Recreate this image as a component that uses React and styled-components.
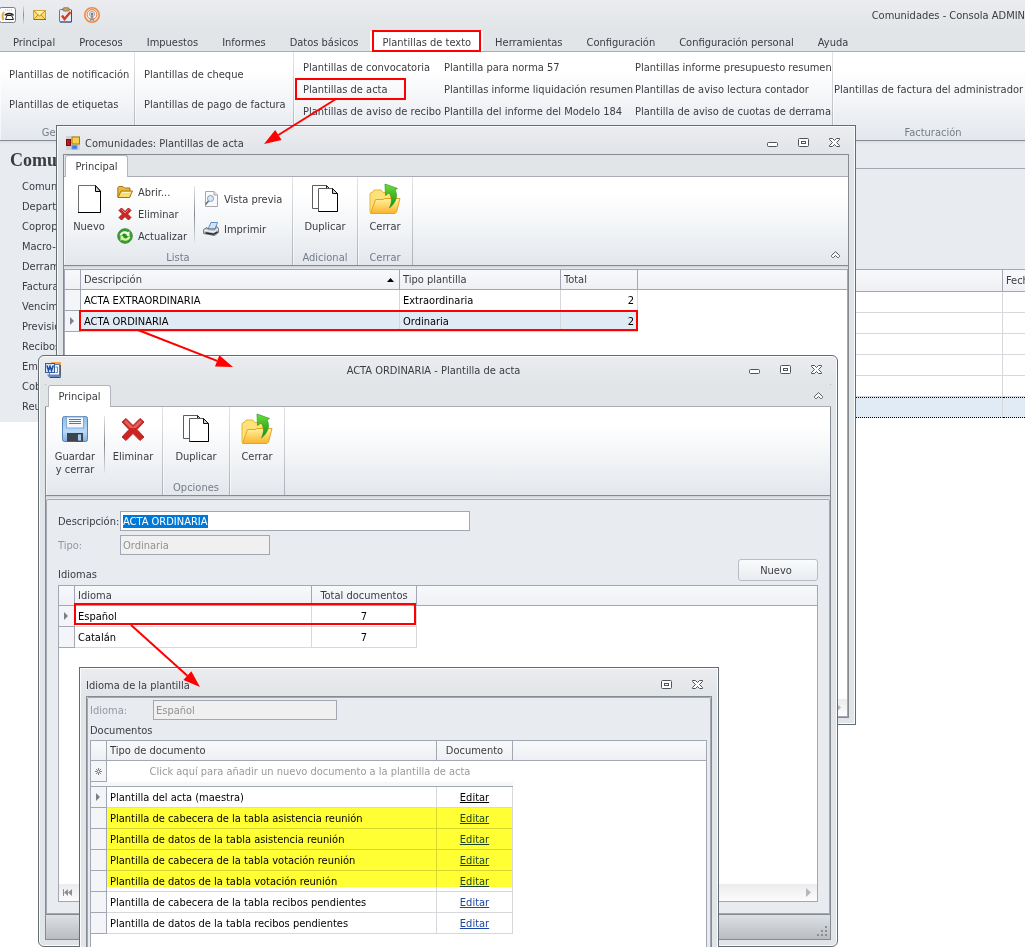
import React, { useEffect, useRef } from 'react';
import styled, { createGlobalStyle, css } from 'styled-components';

const FONT = '"DejaVu Sans Condensed", "DejaVu Sans", sans-serif';
const LINE = '#a2a7b3';
const CELL_LINE = '#d6d8dc';
const FRAME = '#e1e5e8';
const PANEL = '#e8ebf0';

const GlobalStyle = createGlobalStyle`
    *, *::before, *::after {
        box-sizing: border-box;
    }
    body {
        margin: 0;
        font-family: ${FONT};
        font-size: 11px;
        line-height: 13px;
        color: #3b3b42;
        background: #fff;
    }
    button, input {
        font: inherit;
        color: inherit;
        letter-spacing: inherit;
    }
    svg {
        display: block;
        flex: none;
    }
`;

const Desktop = styled.div`
    position: relative;
    height: 100vh;
    overflow: hidden;
    white-space: nowrap;
    cursor: default;
`;

const plainButton = css`
    border: 0;
    padding: 0;
    background: none;
`;

/* ---------- ribbon ---------- */

const Ribbon = styled.div`
    display: flex;
    height: 89px;
    border-bottom: 1px solid #868a92;
    background: linear-gradient(#fff 20%, #f3f5f7 55%, #e3e7ec);
    overflow: hidden;
`;
const RibbonShadow = styled.div`
    height: 3px;
    background: linear-gradient(#cdd0d5, ${PANEL});
`;
const Group = styled.section`
    display: flex;
    flex-direction: column;
    flex: none;
    width: ${(props) => props.$width}px;
    border-right: 1px solid;
    border-image: linear-gradient(#e3e5e8, #abafb8) 1;
    box-shadow: inset 1px 0 0 rgba(255, 255, 255, 0.6);
`;
const GroupBody = styled.div`
    display: flex;
    height: 72px;
`;
const GroupLabel = styled.div`
    height: 16px;
    line-height: 18px;
    text-align: center;
    color: #767b8a;
`;
const ItemColumn = styled.div`
    display: flex;
    flex-direction: column;
    justify-content: center;
    align-items: flex-start;
    flex: none;
    width: ${(props) => (props.$width ? `${props.$width}px` : 'auto')};
    padding-top: 2px;
    padding-left: ${(props) => props.$indent || 0}px;
`;
const Item = styled.button`
    ${plainButton};
    display: flex;
    align-items: center;
    gap: 5px;
    height: ${(props) => (props.$loose ? 30 : 22)}px;
`;
const BigButton = styled.button`
    ${plainButton};
    display: flex;
    flex-direction: column;
    align-items: center;
    gap: 5px;
    width: ${(props) => (props.$width ? `${props.$width}px` : '100%')};
    padding-top: 6px;
`;
const Divider = styled.div`
    width: 1px;
    margin: 9px 0 6px;
    background: linear-gradient(#e3e5e8, #85898f 50%, #e3e5e8);
`;
const TabStrip = styled.div`
    display: flex;
    align-items: flex-end;
    height: 22px;
    border-bottom: 1px solid #a9acb5;
    background: ${FRAME};
    ${(props) => props.$flush && 'margin: 0 -1px; padding-left: 2px;'}
`;
const Tab = styled.button`
    ${plainButton};
    width: 63px;
    height: 22px;
    margin: 0 auto -1px 1px;
    border: 1px solid #b3b6be;
    border-bottom: 0;
    border-radius: 3px 3px 0 0;
    background: #fff;
`;

/* ---------- main window ---------- */

const MainTitle = styled.header`
    display: flex;
    align-items: center;
    height: 31px;
    padding-bottom: 1px;
    background: linear-gradient(#ebecef, ${FRAME});
`;
const QuickButton = styled.button`
    ${plainButton};
    margin-right: 10px;
`;
const QuickSeparator = styled.span`
    width: 1px;
    height: 18px;
    margin: 0 8px 0 -3px;
    background: linear-gradient(#d8dbdf, #8b8f96, #d8dbdf);
`;
const MainCaption = styled.h2`
    margin: 0 0 0 auto;
    font: inherit;
`;
const MainTabs = styled.nav`
    display: flex;
    height: 21px;
    padding-left: 1px;
    border-bottom: 1px solid #a9abb5;
    background: ${FRAME};
`;
const MainTab = styled.button`
    ${plainButton};
    height: 20px;
    padding: 2px 12px 0;
    flex: none;
    ${(props) => props.$active && 'background: #fff;'}
`;
const MainBody = styled.main`
    display: flex;
    align-items: flex-start;
`;
const Sidebar = styled.nav`
    width: 256px;
    padding: 8px 0 6px 10px;
    background: linear-gradient(#d9dce1, ${PANEL} 3px);
`;
const SidebarTitle = styled.h1`
    margin: 0 0 5px;
    font: bold 18px/22px 'Liberation Serif', serif;
`;
const SidebarLink = styled.a`
    display: block;
    height: 20px;
    padding-left: 12px;
    line-height: 21px;
    color: inherit;
    text-decoration: none;
`;
const Content = styled.div`
    flex: 1;
    background: linear-gradient(#d9dce1, ${PANEL} 3px);
`;
const FilterBar = styled.div`
    height: 28px;
    border-bottom: 1px solid ${LINE};
`;
const FilterArea = styled.div`
    height: 100px;
`;

/* ---------- tables ---------- */

const Table = styled.table`
    width: 100%;
    table-layout: fixed;
    border-collapse: separate;
    border-spacing: 0;
`;
const Col = styled.col`
    width: ${(props) => props.$width}px;
`;
const Th = styled.th`
    height: 20px;
    padding: 0 3px;
    border-right: 1px solid ${LINE};
    border-bottom: 1px solid ${LINE};
    background: linear-gradient(#f8f9fb, #eef0f4);
    font-weight: normal;
    text-align: ${(props) => props.$align || 'left'};
    overflow: hidden;
    &:last-child {
        border-right: 0;
    }
`;
const Td = styled.td`
    height: 21px;
    padding: 0 3px;
    border-right: 1px solid ${CELL_LINE};
    border-bottom: 1px solid ${CELL_LINE};
    color: #000;
    text-align: ${(props) => props.$align || 'left'};
    ${(props) => props.$selected && 'background: #e1ebf6;'}
`;
const Handle = styled.td`
    height: 21px;
    padding: 0;
    border-right: 1px solid ${LINE};
    border-bottom: 1px solid ${LINE};
    background: #f4f5f8;
    svg {
        margin: auto;
    }
`;
const Sorted = styled.span`
    display: flex;
    align-items: center;
    justify-content: space-between;
    padding-right: 2px;
`;
const BackTable = styled(Table)`
    border-top: 1px solid ${LINE};
    background: #fff;
    ${Th} {
        height: 22px;
    }
    ${Td}:last-child {
        border-right: 0;
    }
    tr:last-child ${Td} {
        border-top: 1px dotted #000;
        border-bottom: 1px dotted #000;
        background: #e1ebf6;
    }
`;
const NewRowHint = styled(Td)`
    border: 0;
    color: #9a9a9e;
`;
const NewRowGap = styled.td`
    height: 5px;
    padding: 0;
    border-bottom: 1px solid ${LINE};
    background: #f6f7f9;
`;
const EditLink = styled.a`
    color: ${(props) => (props.$current ? '#000' : '#1c46a4')};
    text-decoration: underline;
    text-underline-offset: 1px;
`;
const GridPane = styled.div`
    display: flex;
    flex-direction: column;
    flex: 1;
    border: 1px solid ${LINE};
    background: #fff;
`;
const ScrollStrip = styled.div`
    display: flex;
    align-items: center;
    justify-content: space-between;
    height: 17px;
    margin-top: auto;
    padding: 0 6px 0 4px;
    background: linear-gradient(#ececee, #fcfcfc);
`;

/* ---------- floating windows ---------- */

const Window = styled.section`
    position: absolute;
    left: ${(props) => props.$x}px;
    top: ${(props) => props.$y}px;
    width: ${(props) => props.$w}px;
    height: ${(props) => props.$h}px;
    display: flex;
    flex-direction: column;
    padding: 0 6px 6px;
    border: 1px solid #636b73;
    border-radius: ${(props) => (props.$round ? '6px' : 0)};
    background: linear-gradient(#ebecef, ${FRAME} 30px);
    box-shadow: inset 0 0 0 1px #fafbfc;
`;
const TitleBar = styled.header`
    display: flex;
    align-items: center;
    flex: none;
    height: 28px;
    padding: ${(props) => (props.$flush ? 0 : 6)}px 9px 0 ${(props) => (props.$plain ? 0 : 3)}px;
`;
const WindowTitle = styled.h2`
    flex: 1;
    margin: 0;
    padding-left: ${(props) => props.$pad || 0}px;
    font: inherit;
    text-align: ${(props) => (props.$center ? 'center' : 'left')};
`;
const Controls = styled.div`
    display: flex;
    gap: 20px;
    padding-bottom: 1px;
`;
const ControlButton = styled.button`
    ${plainButton};
`;
const Client = styled.div`
    display: flex;
    flex-direction: column;
    flex: 1;
    border: 1px solid #868a92;
    ${(props) => props.$flush && `border-top-color: ${FRAME};`}
`;
const Collapse = styled.button`
    ${plainButton};
    align-self: flex-end;
    margin: 0 8px 7px auto;
`;
const Panel = styled.div`
    display: flex;
    flex-direction: column;
    flex: 1;
    padding: ${(props) => (props.$tight ? '2px 3px 3px 2px' : '11px 11px 11px 11px')};
    border: 1px solid ${LINE};
    border-radius: 2px 2px 0 0;
    background: ${PANEL};
`;
const Field = styled.div`
    display: flex;
    align-items: center;
    margin-bottom: 4px;
    color: ${(props) => (props.$off ? '#9698a0' : 'inherit')};
`;
const FieldLabel = styled.label`
    width: ${(props) => props.$width}px;
`;
const TextBox = styled.input`
    width: ${(props) => props.$width}px;
    height: 20px;
    padding: 0 2px;
    border: 1px solid ${LINE};
    border-radius: 0;
    background: #fff;
    outline: 0;
    &:disabled {
        background: #f0f0f0;
        color: #929292;
    }
    &::selection {
        background: #0078d7;
        color: #fff;
    }
`;
const ListHeader = styled.div`
    display: flex;
    align-items: flex-end;
    justify-content: space-between;
    margin-bottom: ${(props) => (props.$tight ? 3 : 4)}px;
`;
const PushButton = styled.button`
    width: 80px;
    height: 22px;
    padding: 0 4px 0 0;
    border: 1px solid #b9bdc4;
    border-radius: 3px;
    background: linear-gradient(#f9fbfc, #e9ecf0);
`;
const StatusBar = styled.footer`
    display: flex;
    align-items: flex-end;
    justify-content: flex-end;
    height: 25px;
    padding: 2px;
    border-top: 1px solid #868a92;
    background: linear-gradient(#dde0e3, #b9bdc2);
`;

/* ---------- annotations ---------- */

const Mark = styled.div`
    position: absolute;
    left: ${(props) => props.$x}px;
    top: ${(props) => props.$y}px;
    width: ${(props) => props.$w}px;
    height: ${(props) => props.$h}px;
    border: 2px solid #f00;
    pointer-events: none;
`;
const Highlight = styled(Mark)`
    border: 0;
    background: #ff3;
    mix-blend-mode: multiply;
`;
const Arrows = styled.svg`
    position: absolute;
    left: 0;
    top: 0;
    pointer-events: none;
`;

/* ---------- icons ---------- */

const PageIcon = () => (
    <svg width="32" height="32" viewBox="0 0 32 32">
        <path d="M5.500 2.500H22.500L27.500 7.500V29.500H5.500Z" fill="#fff" stroke="#6d6d6d" />
        <path d="M5 29.500H27.500V8" fill="none" stroke="#000" />
        <path d="M22.500 2.500V8.500H27.500Z" fill="#d5d5d5" stroke="#000" />
    </svg>
);
const CopyIcon = () => (
    <svg width="32" height="32" viewBox="0 0 32 32">
        <path d="M3.500 2.500H17.500L21.500 6.500V25.500H3.500Z" fill="#fff" stroke="#5c5c5c" />
        <path d="M17.500 2.500V6H21Z" fill="#ccc" stroke="#222" />
        <path d="M9.500 5.500H23.500L28.500 10.500V28.500H9.500Z" fill="#fff" stroke="#5c5c5c" />
        <path d="M9.500 28.500H28.500V10.500" fill="none" stroke="#000" />
        <path d="M23.500 5.500V10.500H28.500Z" fill="#d0d0d0" stroke="#111" />
    </svg>
);
const CloseFolderIcon = () => (
    <svg width="32" height="32" viewBox="0 0 32 32">
        <defs>
            <linearGradient id="fold" x1="0" y1="0" x2="0" y2="1">
                <stop offset="0" stopColor="#fff2a0" />
                <stop offset="1" stopColor="#fbb42a" />
            </linearGradient>
            <linearGradient id="leaf" x1="0" y1="0" x2="0" y2="1">
                <stop offset="0" stopColor="#6be03a" />
                <stop offset="1" stopColor="#138a10" />
            </linearGradient>
        </defs>
        <path d="M1 29V10.500L4 8.500L5 7H12L14 9.500H22V29Z" fill="#fde27a" stroke="#e8b535" />
        <path d="M1.500 30.500L6.500 16.500H14L16 15.500H31L27.500 29L26 30.500Z" fill="url(#fold)" stroke="#e9a41c" />
        <path d="M16 1L28.500 5.500L26 7C29.500 13 26.500 20 20.500 25C23 19 23.500 14 20 10L16.500 12.500Z" fill="url(#leaf)" stroke="#2f9a22" strokeWidth=".7" />
    </svg>
);
const CrossIcon = ({ size }) => (
    <svg width={size} height={size} viewBox="0 0 32 32">
        <path
            d="M9 5.500L16 12.500L23 5.500L27 9L20 16.500L27 24L23 27.500L16 20.500L9 27.500L5 24L12 16.500L5 9Z"
            fill="#cb2422"
            stroke="#b52b2b"
            strokeLinejoin="round"
        />
        <path d="M9 7L16 14L23 7L25 9L19 15H13L7 9Z" fill="#e8716c" opacity=".8" />
    </svg>
);
const SmallCrossIcon = () => (
    <svg width="16" height="16" viewBox="0 0 16 16">
        <path
            d="M4.500 2L8 5.500L11.500 2L14 4.500L10.500 8L14 11.500L11.500 14L8 10.500L4.500 14L2 11.500L5.500 8L2 4.500Z"
            fill="#d02623"
            stroke="#a51b1c"
            strokeLinejoin="round"
        />
        <path d="M4.500 3.500L8 7L11.500 3.500" fill="none" stroke="#ee8580" />
    </svg>
);
const SaveIcon = () => (
    <svg width="32" height="32" viewBox="0 0 32 32">
        <defs>
            <linearGradient id="disk" x1="0" y1="0" x2="0" y2="1">
                <stop offset="0" stopColor="#8fbbe8" />
                <stop offset=".6" stopColor="#b9dbf7" />
                <stop offset="1" stopColor="#7fb0e4" />
            </linearGradient>
        </defs>
        <rect x="3.500" y="3.500" width="25" height="25" rx="2" fill="url(#disk)" stroke="#5684b9" />
        <rect x="7.500" y="4" width="17" height="11" fill="#f4f8fc" stroke="#86a9cf" />
        <path d="M10 6.500H22M10 8.500H22M10 10.500H22" stroke="#6c7680" />
        <rect x="8" y="20" width="16" height="8.500" fill="#3d444c" />
        <rect x="18.500" y="21" width="4" height="7" fill="#a9c8ea" stroke="#222" strokeWidth=".6" />
    </svg>
);
const OpenIcon = () => (
    <svg width="16" height="16" viewBox="0 0 16 16">
        <path d="M.8 13V3.500L2 2.500H6L7.500 4H13V13Z" fill="#e8b93a" stroke="#a87716" />
        <path d="M1 13.500L4 7H15.500L12.500 13.500Z" fill="#fcdc6a" stroke="#a8740f" />
        <path d="M5 8.500H13.500" stroke="#fff6c8" />
    </svg>
);
const RefreshIcon = () => (
    <svg width="16" height="16" viewBox="0 0 16 16">
        <circle cx="8" cy="8" r="7.300" fill="#2f9f2b" stroke="#4a8a4c" />
        <path d="M2.500 7.500C3 3.500 8 2 11 4.200L12.500 3V8H8L9.300 6.200C7.500 5 5.500 5.500 5 7.500Z" fill="#f4fbe9" />
        <path d="M13.500 8.500C13 12.500 8 14 5 11.800L3.500 13V8H8L6.700 9.800C8.500 11 10.500 10.500 11 8.500Z" fill="#d9f2a0" />
        <path d="M6 6.500H10V9.500H6Z" fill="#1c8a20" opacity=".8" />
    </svg>
);
const PreviewIcon = () => (
    <svg width="16" height="16" viewBox="0 0 16 16">
        <path d="M2.500 .5H11L14.500 4V15.500H2.500Z" fill="#fafafa" stroke="#a5a8ad" />
        <path d="M11 .5V4H14.500" fill="#ddd" stroke="#a5a8ad" />
        <circle cx="7.500" cy="7.500" r="3" fill="#d7e9f8" stroke="#7c9cbc" />
        <path d="M5.500 10L2.500 13.500" stroke="#6d7278" strokeWidth="1.600" />
    </svg>
);
const PrintIcon = () => (
    <svg width="16" height="16" viewBox="0 0 16 16">
        <path d="M5 8L8 1.500H14.500L12 8Z" fill="#cfe3fa" stroke="#5f8fc4" />
        <path d="M.6 8.500L4 6.500L5 8H12L13.500 5.500L15.500 7V11.500L11.500 14.500L.6 12.500Z" fill="#c3c8cf" stroke="#6f757d" />
        <path d="M1 9.200L11 11L15.300 8" fill="none" stroke="#f7f8f9" />
        <path d="M2.500 11.800L10.500 13.300L14.500 10.800" fill="none" stroke="#22262b" strokeWidth="1.400" />
    </svg>
);
const FormIcon = () => (
    <svg width="14" height="14" viewBox="0 0 14 14">
        <rect width="14" height="14" fill="#cfd2d6" />
        <rect x=".5" y="3.500" width="4" height="6" fill="#c01818" stroke="#7d0d0d" />
        <rect x="6" y="1" width="7.500" height="7" fill="#f8cf4b" stroke="#a87b14" />
        <rect x="6" y="9.500" width="5" height="3.500" fill="#3f78e0" stroke="#6f9cf0" />
    </svg>
);
const WordIcon = () => (
    <svg width="16" height="16" viewBox="0 0 16 16">
        <rect x="6" y="0" width="10" height="13" fill="#f1a545" />
        <rect x="4.500" y="2.500" width="10" height="11" fill="#f5f8fc" stroke="#5f83b8" />
        <path d="M2 12.500H14.500V15.500H4Z" fill="#6687b5" />
        <path d="M15.300 3V15.500H5" stroke="#2f4f80" fill="none" />
        <rect x=".5" y="1.500" width="9" height="9" fill="#d5e4f8" stroke="#2f5ca6" />
        <path d="M2 3.500L3.500 8.500L5 4.500L6.500 8.500L8.300 3.500" fill="none" stroke="#1d4a9c" strokeWidth="1.500" />
        <path d="M10.500 5H12.500V10.500H10.500" stroke="#5d86c4" fill="none" />
    </svg>
);
const PhoneIcon = () => (
    <svg width="16" height="16" viewBox="0 0 16 16">
        <rect x="-.5" y=".5" width="16" height="15" rx="2" fill="#fdfdfd" stroke="#7c7f84" />
        <path d="M5 3H12" stroke="#b0b3b8" strokeDasharray="1 1" />
        <path d="M4 5C2 7.500 2 10 3.500 13" fill="none" stroke="#e9a62d" strokeWidth="2" />
        <path d="M4.500 8.500C4.500 4.800 14 4.800 14 8.500H11.500L11 7.500H7.500L7 8.500Z" fill="#222" />
        <path d="M5.500 12.500L7 8.500H11.500L13.500 12.500Z" fill="#fff" stroke="#222" />
    </svg>
);
const MailIcon = () => (
    <svg width="16" height="16" viewBox="0 0 16 16">
        <rect x="1.500" y="3.500" width="12" height="9" fill="#fbdc72" stroke="#d0a33c" />
        <path d="M2 12.500H14" stroke="#9c6d12" />
        <path d="M2 4L7.500 9L13 4M2 12L6 8M13 12L9 8" fill="none" stroke="#c08f24" />
        <path d="M3 4H12L7.500 8Z" fill="#fff0b5" />
    </svg>
);
const TaskIcon = () => (
    <svg width="16" height="16" viewBox="0 0 16 16">
        <rect x="1.500" y="2.500" width="12" height="12.500" rx="1" fill="#e3ecf8" stroke="#5b78a8" />
        <path d="M13.500 3V15H2" fill="none" stroke="#34507e" />
        <rect x="5" y=".8" width="6" height="3.200" rx="1" fill="#c9a96a" stroke="#7f6530" strokeWidth=".8" />
        <path d="M4 8.500L6.500 12L12.500 5" fill="none" stroke="#df3b1d" strokeWidth="2.400" />
    </svg>
);
const BroadcastIcon = () => (
    <svg width="16" height="16" viewBox="0 0 16 16">
        <circle cx="8" cy="8" r="7.200" fill="#f3ece8" stroke="#f08b3e" strokeWidth="1.600" />
        <circle cx="8" cy="7.500" r="4.900" fill="none" stroke="#e77a4c" />
        <circle cx="8" cy="7" r="2.600" fill="none" stroke="#a9acb3" />
        <circle cx="8" cy="7" r="1.300" fill="#7a7e86" />
        <path d="M8 8L6 14.500M8 8L10 14.500M7 11H9M6.500 13H9.500" stroke="#85898f" strokeWidth=".9" />
    </svg>
);
const MinimizeIcon = () => (
    <svg width="11" height="9" viewBox="0 0 11 9">
        <rect x=".5" y="4.500" width="10" height="4" rx="1" fill="#fff" stroke="#4f5459" />
    </svg>
);
const MaximizeIcon = () => (
    <svg width="11" height="9" viewBox="0 0 11 9">
        <rect x=".5" y=".5" width="10" height="8" rx="1" fill="#fff" stroke="#4f5459" />
        <rect x="3.500" y="3.500" width="4" height="2" fill="#fff" stroke="#4f5459" />
    </svg>
);
const CloseIcon = () => (
    <svg width="11" height="9" viewBox="0 0 11 9">
        <path
            d="M.5 .5H3.500L5.500 2.500L7.500 .5H10.500V1.500L7.500 4.500L10.500 7.500V8.500H7.500L5.500 6.500L3.500 8.500H.5V7.500L3.500 4.500L.5 1.500Z"
            fill="#fff"
            stroke="#4f5459"
        />
    </svg>
);
const ChevronIcon = () => (
    <svg width="9" height="7" viewBox="0 0 9 7">
        <path d="M.5 4.500L4.500 .7L8.500 4.500V5.500L7.500 6.500H6.500L4.500 4.500L2.500 6.500H1.500L.5 5.500Z" fill="#fff" stroke="#4f5459" />
    </svg>
);
const RowMarker = () => (
    <svg width="5" height="8" viewBox="0 0 5 8">
        <path d="M0 0L4 4L0 8Z" fill="#7b8088" />
    </svg>
);
const NewMarker = () => (
    <svg width="7" height="7" viewBox="0 0 7 7">
        <path d="M3.500 0V7M0 3.500H7M1 1L6 6M6 1L1 6" stroke="#7b8088" />
        <circle cx="3.500" cy="3.500" r="1" fill="#fff" />
    </svg>
);
const SortArrow = () => (
    <svg width="7" height="4" viewBox="0 0 7 4">
        <path d="M0 4L3.500 0L7 4Z" fill="#000" />
    </svg>
);
const FirstIcon = () => (
    <svg width="9" height="7" viewBox="0 0 9 7">
        <path d="M.5 0V7" stroke="#8d9197" />
        <path d="M1 3.500L5 0V7ZM5 3.500L9 0V7Z" fill="#8d9197" />
    </svg>
);
const NextIcon = () => (
    <svg width="5" height="9" viewBox="0 0 5 9">
        <path d="M0 0L5 4.500L0 9Z" fill="#b5b7bb" />
    </svg>
);
const GripIcon = () => (
    <svg width="11" height="11" viewBox="0 0 11 11" fill="#8b8f95">
        <path d="M8 0h2v2h-2zM4 4h2v2h-2zM8 4h2v2h-2zM0 8h2v2h-2zM4 8h2v2h-2zM8 8h2v2h-2z" />
    </svg>
);

/* ---------- data ---------- */

const mainTabs = [
    'Principal',
    'Procesos',
    'Impuestos',
    'Informes',
    'Datos básicos',
    'Plantillas de texto',
    'Herramientas',
    'Configuración',
    'Configuración personal',
    'Ayuda',
];

const sections = [
    'Comunidades',
    'Departamentos',
    'Copropietarios',
    'Macro-comunidades',
    'Derramas',
    'Facturas',
    'Vencimientos',
    'Previsiones',
    'Recibos',
    'Emisiones',
    'Cobros',
    'Reuniones',
];

const mainGroups = [
    {
        label: 'Generales',
        width: 135,
        columns: [{ indent: 9, items: ['Plantillas de notificación', 'Plantillas de etiquetas'] }],
    },
    {
        label: '',
        width: 159,
        columns: [{ indent: 9, items: ['Plantillas de cheque', 'Plantillas de pago de factura'] }],
    },
    {
        label: '',
        width: 539,
        columns: [
            {
                width: 150,
                indent: 9,
                items: ['Plantillas de convocatoria', 'Plantillas de acta', 'Plantillas de aviso de recibo'],
            },
            {
                width: 191,
                indent: 0,
                items: [
                    'Plantilla para norma 57',
                    'Plantillas informe liquidación resumen',
                    'Plantilla del informe del Modelo 184',
                ],
            },
            {
                indent: 0,
                items: [
                    'Plantillas informe presupuesto resumen',
                    'Plantillas de aviso lectura contador',
                    'Plantilla de aviso de cuotas de derrama',
                ],
            },
        ],
    },
    {
        label: 'Facturación',
        width: 201,
        columns: [{ indent: 1, items: ['Plantillas de factura del administrador'] }],
    },
];

const templates = [
    { name: 'ACTA EXTRAORDINARIA', type: 'Extraordinaria', total: 2 },
    { name: 'ACTA ORDINARIA', type: 'Ordinaria', total: 2, selected: true },
];

const languages = [
    { name: 'Español', total: 7, selected: true },
    { name: 'Catalán', total: 7 },
];

const documents = [
    'Plantilla del acta (maestra)',
    'Plantilla de cabecera de la tabla asistencia reunión',
    'Plantilla de datos de la tabla asistencia reunión',
    'Plantilla de cabecera de la tabla votación reunión',
    'Plantilla de datos de la tabla votación reunión',
    'Plantilla de cabecera de la tabla recibos pendientes',
    'Plantilla de datos de la tabla recibos pendientes',
];

const arrows = [
    { from: [336, 99], to: [264, 144] },
    { from: [138, 330], to: [233, 367] },
    { from: [131, 625], to: [200, 687] },
];

/* ---------- components ---------- */

function MainWindow() {
    return (
        <>
            <MainTitle>
                <QuickButton aria-label="Consola">
                    <PhoneIcon />
                </QuickButton>
                <QuickSeparator />
                <QuickButton aria-label="Correo">
                    <MailIcon />
                </QuickButton>
                <QuickButton aria-label="Tareas">
                    <TaskIcon />
                </QuickButton>
                <QuickButton aria-label="Difusión">
                    <BroadcastIcon />
                </QuickButton>
                <MainCaption>Comunidades - Consola ADMIN</MainCaption>
            </MainTitle>
            <MainTabs>
                {mainTabs.map((tab) => (
                    <MainTab key={tab} $active={tab === 'Plantillas de texto'}>
                        {tab}
                    </MainTab>
                ))}
            </MainTabs>
            <Ribbon>
                {mainGroups.map((group) => (
                    <Group key={group.width} $width={group.width}>
                        <GroupBody>
                            {group.columns.map((col) => (
                                <ItemColumn key={col.items[0]} $width={col.width} $indent={col.indent}>
                                    {col.items.map((item) => (
                                        <Item key={item} $loose={col.items.length === 2}>
                                            {item}
                                        </Item>
                                    ))}
                                </ItemColumn>
                            ))}
                        </GroupBody>
                        <GroupLabel>{group.label}</GroupLabel>
                    </Group>
                ))}
            </Ribbon>
            <MainBody>
                <Sidebar>
                    <SidebarTitle>Comunidades</SidebarTitle>
                    {sections.map((section) => (
                        <SidebarLink key={section} href="#">
                            {section}
                        </SidebarLink>
                    ))}
                </Sidebar>
                <Content>
                    <FilterBar />
                    <FilterArea />
                    <BackTable>
                        <colgroup>
                            <col />
                            <Col $width={22} />
                        </colgroup>
                        <thead>
                            <tr>
                                <Th />
                                <Th>Fecha</Th>
                            </tr>
                        </thead>
                        <tbody>
                            {[1, 2, 3, 4, 5, 6].map((row) => (
                                <tr key={row}>
                                    <Td />
                                    <Td />
                                </tr>
                            ))}
                        </tbody>
                    </BackTable>
                </Content>
            </MainBody>
        </>
    );
}

function WindowControls({ minimize }) {
    return (
        <Controls>
            {minimize && (
                <ControlButton aria-label="Minimizar">
                    <MinimizeIcon />
                </ControlButton>
            )}
            <ControlButton aria-label="Maximizar">
                <MaximizeIcon />
            </ControlButton>
            <ControlButton aria-label="Cerrar ventana">
                <CloseIcon />
            </ControlButton>
        </Controls>
    );
}

function TemplatesWindow() {
    return (
        <Window $x={56} $y={125} $w={800} $h={600}>
            <TitleBar>
                <FormIcon />
                <WindowTitle $pad={5}>Comunidades: Plantillas de acta</WindowTitle>
                <WindowControls minimize />
            </TitleBar>
            <Client>
                <TabStrip>
                    <Tab>Principal</Tab>
                </TabStrip>
                <Ribbon>
                    <Group $width={229}>
                        <GroupBody>
                            <BigButton $width={50}>
                                <PageIcon />
                                Nuevo
                            </BigButton>
                            <ItemColumn $width={80} $indent={3}>
                                <Item>
                                    <OpenIcon />
                                    Abrir...
                                </Item>
                                <Item>
                                    <SmallCrossIcon />
                                    Eliminar
                                </Item>
                                <Item>
                                    <RefreshIcon />
                                    Actualizar
                                </Item>
                            </ItemColumn>
                            <Divider />
                            <ItemColumn $indent={8}>
                                <Item $loose>
                                    <PreviewIcon />
                                    Vista previa
                                </Item>
                                <Item $loose>
                                    <PrintIcon />
                                    Imprimir
                                </Item>
                            </ItemColumn>
                        </GroupBody>
                        <GroupLabel>Lista</GroupLabel>
                    </Group>
                    <Group $width={65}>
                        <GroupBody>
                            <BigButton>
                                <CopyIcon />
                                Duplicar
                            </BigButton>
                        </GroupBody>
                        <GroupLabel>Adicional</GroupLabel>
                    </Group>
                    <Group $width={55}>
                        <GroupBody>
                            <BigButton>
                                <CloseFolderIcon />
                                Cerrar
                            </BigButton>
                        </GroupBody>
                        <GroupLabel>Cerrar</GroupLabel>
                    </Group>
                    <Collapse aria-label="Contraer">
                        <ChevronIcon />
                    </Collapse>
                </Ribbon>
                <RibbonShadow />
                <GridPane>
                    <Table>
                        <colgroup>
                            <Col $width={16} />
                            <Col $width={319} />
                            <Col $width={161} />
                            <Col $width={77} />
                            <col />
                        </colgroup>
                        <thead>
                            <tr>
                                <Th />
                                <Th>
                                    <Sorted>
                                        Descripción
                                        <SortArrow />
                                    </Sorted>
                                </Th>
                                <Th>Tipo plantilla</Th>
                                <Th>Total</Th>
                                <Th />
                            </tr>
                        </thead>
                        <tbody>
                            {templates.map((row) => (
                                <tr key={row.name}>
                                    <Handle>{row.selected && <RowMarker />}</Handle>
                                    <Td $selected={row.selected}>{row.name}</Td>
                                    <Td $selected={row.selected}>{row.type}</Td>
                                    <Td $selected={row.selected} $align="right">
                                        {row.total}
                                    </Td>
                                </tr>
                            ))}
                        </tbody>
                    </Table>
                    <ScrollStrip>
                        <span />
                        <NextIcon />
                    </ScrollStrip>
                </GridPane>
            </Client>
        </Window>
    );
}

function TemplateWindow() {
    const description = useRef(null);

    useEffect(() => {
        description.current.focus({ preventScroll: true });
        description.current.select();
    }, []);

    return (
        <Window $x={38} $y={355} $w={800} $h={592} $round>
            <TitleBar $flush $plain>
                <WordIcon />
                <WindowTitle $center $pad={57}>
                    ACTA ORDINARIA - Plantilla de acta
                </WindowTitle>
                <WindowControls minimize />
            </TitleBar>
            <Client $flush>
                <TabStrip $flush>
                    <Tab>Principal</Tab>
                    <Collapse aria-label="Contraer">
                        <ChevronIcon />
                    </Collapse>
                </TabStrip>
                <Ribbon>
                    <Group $width={117}>
                        <GroupBody>
                            <BigButton $width={58}>
                                <SaveIcon />
                                <span>
                                    Guardar
                                    <br />y cerrar
                                </span>
                            </BigButton>
                            <Divider />
                            <BigButton $width={56}>
                                <CrossIcon size={32} />
                                Eliminar
                            </BigButton>
                        </GroupBody>
                    </Group>
                    <Group $width={67}>
                        <GroupBody>
                            <BigButton>
                                <CopyIcon />
                                Duplicar
                            </BigButton>
                        </GroupBody>
                        <GroupLabel>Opciones</GroupLabel>
                    </Group>
                    <Group $width={55}>
                        <GroupBody>
                            <BigButton>
                                <CloseFolderIcon />
                                Cerrar
                            </BigButton>
                        </GroupBody>
                    </Group>
                </Ribbon>
                <RibbonShadow />
                <Panel>
                    <Field>
                        <FieldLabel $width={62} htmlFor="descripcion">
                            Descripción:
                        </FieldLabel>
                        <TextBox ref={description} id="descripcion" $width={350} defaultValue="ACTA ORDINARIA" />
                    </Field>
                    <Field $off>
                        <FieldLabel $width={62} htmlFor="tipo">
                            Tipo:
                        </FieldLabel>
                        <TextBox id="tipo" $width={150} defaultValue="Ordinaria" disabled />
                    </Field>
                    <ListHeader>
                        <span>Idiomas</span>
                        <PushButton>Nuevo</PushButton>
                    </ListHeader>
                    <GridPane>
                        <Table>
                            <colgroup>
                                <Col $width={16} />
                                <Col $width={237} />
                                <Col $width={105} />
                                <col />
                            </colgroup>
                            <thead>
                                <tr>
                                    <Th />
                                    <Th>Idioma</Th>
                                    <Th $align="center">Total documentos</Th>
                                    <Th />
                                </tr>
                            </thead>
                            <tbody>
                                {languages.map((row) => (
                                    <tr key={row.name}>
                                        <Handle>{row.selected && <RowMarker />}</Handle>
                                        <Td>{row.name}</Td>
                                        <Td $align="center">{row.total}</Td>
                                    </tr>
                                ))}
                            </tbody>
                        </Table>
                        <ScrollStrip>
                            <FirstIcon />
                            <NextIcon />
                        </ScrollStrip>
                    </GridPane>
                </Panel>
                <StatusBar>
                    <GripIcon />
                </StatusBar>
            </Client>
        </Window>
    );
}

function LanguageWindow() {
    return (
        <Window $x={79} $y={667} $w={640} $h={480}>
            <TitleBar $plain>
                <WindowTitle>Idioma de la plantilla</WindowTitle>
                <WindowControls />
            </TitleBar>
            <Client>
                <Panel $tight>
                    <Field $off>
                        <FieldLabel $width={63} htmlFor="idioma">
                            Idioma:
                        </FieldLabel>
                        <TextBox id="idioma" $width={184} defaultValue="Español" disabled />
                    </Field>
                    <ListHeader $tight>Documentos</ListHeader>
                    <GridPane>
                        <Table>
                            <colgroup>
                                <Col $width={16} />
                                <Col $width={330} />
                                <Col $width={76} />
                                <col />
                            </colgroup>
                            <thead>
                                <tr>
                                    <Th />
                                    <Th>Tipo de documento</Th>
                                    <Th $align="center">Documento</Th>
                                    <Th />
                                </tr>
                            </thead>
                            <tbody>
                                <tr>
                                    <Handle>
                                        <NewMarker />
                                    </Handle>
                                    <NewRowHint colSpan={2} $align="center">
                                        Click aquí para añadir un nuevo documento a la plantilla de acta
                                    </NewRowHint>
                                </tr>
                                <tr>
                                    <NewRowGap colSpan={3} />
                                </tr>
                                {documents.map((name, i) => (
                                    <tr key={name}>
                                        <Handle>{i === 0 && <RowMarker />}</Handle>
                                        <Td>{name}</Td>
                                        <Td $align="center">
                                            <EditLink href="#" $current={i === 0}>
                                                Editar
                                            </EditLink>
                                        </Td>
                                    </tr>
                                ))}
                            </tbody>
                        </Table>
                    </GridPane>
                </Panel>
            </Client>
        </Window>
    );
}

function Arrow({ from, to }) {
    const angle = Math.atan2(to[1] - from[1], to[0] - from[0]);
    const baseX = to[0] - 17 * Math.cos(angle);
    const baseY = to[1] - 17 * Math.sin(angle);
    const dx = 6 * Math.sin(angle);
    const dy = 6 * Math.cos(angle);
    return (
        <>
            <line x1={from[0]} y1={from[1]} x2={baseX} y2={baseY} stroke="#f00" strokeWidth="2" />
            <polygon
                points={`${to[0]},${to[1]} ${baseX + dx},${baseY - dy} ${baseX - dx},${baseY + dy}`}
                fill="#f00"
            />
        </>
    );
}

export default function App() {
    return (
        <Desktop>
            <GlobalStyle />
            <MainWindow />
            <TemplatesWindow />
            <TemplateWindow />
            <LanguageWindow />
            <Highlight $x={107} $y={808} $w={405} $h={79} />
            <Mark $x={372} $y={30} $w={109} $h={22} />
            <Mark $x={295} $y={78} $w={111} $h={22} />
            <Mark $x={79} $y={310} $w={559} $h={21} />
            <Mark $x={74} $y={603} $w={342} $h={22} />
            <Arrows width="1000" height="900">
                {arrows.map((arrow) => (
                    <Arrow key={arrow.to[0]} from={arrow.from} to={arrow.to} />
                ))}
            </Arrows>
        </Desktop>
    );
}
